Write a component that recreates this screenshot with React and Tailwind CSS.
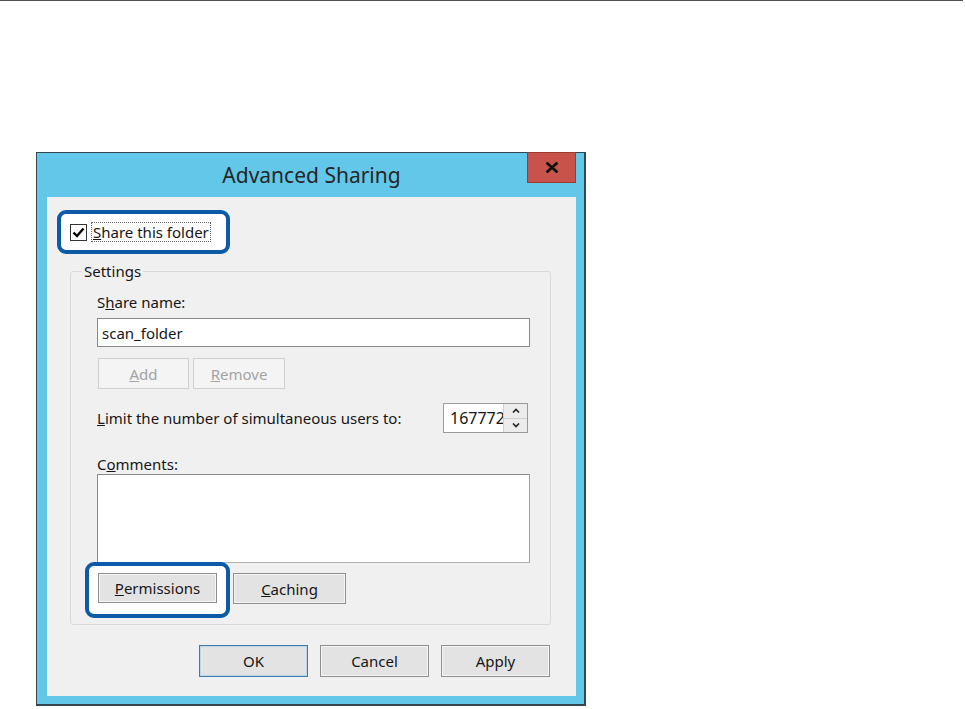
import React from 'react';

const txt = "font-['Noto_Sans',sans-serif] text-[15px] leading-[20px] text-[#161616]";

function WinButton({ children, disabled, primary, className = '' }) {
  const border = primary
    ? 'border-[#3d7bad] shadow-[inset_0_0_0_1px_#bcd6ea]'
    : disabled
    ? 'border-[#cfcfcf]'
    : 'border-[#8f8f8f] shadow-[inset_0_0_0_1px_#f6f6f6]';
  return (
    <div
      className={`flex items-center justify-center border ${border} ${
        disabled ? 'bg-[#f4f4f4] text-[#a3a3a3]' : 'bg-[#e3e3e3] text-[#161616]'
      } ${className}`}
    >
      {children}
    </div>
  );
}

export default function App() {
  return (
    <div className={`w-[965px] h-[709px] bg-white overflow-hidden ${txt}`}>
      <div className="h-px w-[963px] bg-[#505050]" />

      <div className="ml-[36px] mt-[151px] w-[550px] bg-[#62c7e9] border-t border-l border-r-[2px] border-b-[2px] border-[#35464f]">
        {/* title bar */}
        <div className="grid grid-cols-[49px_1fr_49px] h-[44px] pl-[10px] pr-[8px]">
          <div />
          <div className="flex items-center justify-center text-[21px] text-[#262626]">
            Advanced Sharing
          </div>
          <div className="-mt-px h-[31px] w-[49px] bg-[#c8534a] border border-[#9d3b33] flex items-center justify-center">
            <svg width="12" height="11" viewBox="0 0 12 11">
              <path d="M1.5 1.5 L10.5 9.5 M10.5 1.5 L1.5 9.5" stroke="#111" strokeWidth="2.8" strokeLinecap="square" />
            </svg>
          </div>
        </div>

        {/* client area */}
        <div className="ml-[10px] mr-[8px] mb-[8px] bg-[#f0f0f0] pl-[10px] pt-[13px] pb-[19px]">
          {/* highlighted checkbox */}
          <div className="w-[173px] h-[44px] border-[4px] border-[#0d5ba7] rounded-[9px] bg-white flex items-center pl-[9px]">
            <div className="w-[17px] h-[17px] border border-[#333] bg-white flex items-center justify-center">
              <svg width="13" height="11" viewBox="0 0 13 11">
                <path d="M1.5 5.5 L5 9 L11.5 1.5" stroke="#000" strokeWidth="2.4" fill="none" />
              </svg>
            </div>
            <div className="ml-[4px] px-px border border-dotted border-[#666] leading-[18px] whitespace-nowrap">
              <span className="underline">S</span>hare this folder
            </div>
          </div>

          {/* settings group */}
          <div className="mt-[17px] ml-[13px] w-[481px] border border-[#d9d9d9] rounded-[3px] pl-[26px] pr-[20px] pb-[6px]">
            <div className="-mt-[11px] -ml-[15px] w-fit px-[2px] bg-[#f0f0f0]">Settings</div>

            <div className="mt-[11px] h-[20px]">
              S<span className="underline">h</span>are name:
            </div>
            <div className="mt-[6px] h-[29px] w-[433px] bg-white border border-[#8a8a8a] flex items-center pl-[4px]">
              scan_folder
            </div>

            <div className="mt-[11px] flex gap-[4px]">
              <WinButton disabled className="w-[91px] h-[31px] ml-px">
                <span className="underline">A</span>dd
              </WinButton>
              <WinButton disabled className="w-[92px] h-[31px]">
                <span className="underline">R</span>emove
              </WinButton>
            </div>

            <div className="mt-[14px] flex items-center h-[30px]">
              <div className="whitespace-nowrap">
                <span className="underline">L</span>imit the number of simultaneous users to:
              </div>
              <div className="ml-auto mr-[2px] w-[85px] h-[30px] border border-[#9a9a9a] bg-white flex">
                <div className="w-[59px] overflow-hidden pl-[6px] flex items-center whitespace-nowrap text-[16px]">
                  167772
                </div>
                <div className="flex-1 flex flex-col border-l border-[#d0d0d0]">
                  <div className="flex-1 bg-[#ececec] border-b border-[#d0d0d0] flex items-center justify-center">
                    <svg width="8" height="5" viewBox="0 0 8 5">
                      <path d="M1 4.5 L4 1.5 L7 4.5" stroke="#222" strokeWidth="1.6" fill="none" />
                    </svg>
                  </div>
                  <div className="flex-1 bg-[#ececec] flex items-center justify-center">
                    <svg width="8" height="5" viewBox="0 0 8 5">
                      <path d="M1 0.5 L4 3.5 L7 0.5" stroke="#222" strokeWidth="1.6" fill="none" />
                    </svg>
                  </div>
                </div>
              </div>
            </div>

            <div className="mt-[21px] h-[20px]">
              C<span className="underline">o</span>mments:
            </div>
            <div className="h-[89px] w-[433px] bg-white border border-[#8a8a8a] border-b-[#b0b0b0] border-r-[#a0a0a0]" />

            <div className="-mt-px flex items-start">
              <div className="-ml-[12px] w-[145px] h-[56px] border-[4px] border-[#0d5ba7] rounded-[9px] bg-white pl-[9px] pt-[7px]">
                <WinButton className="w-[119px] h-[30px]">
                  <span className="underline">P</span>ermissions
                </WinButton>
              </div>
              <WinButton className="ml-[3px] mt-[11px] w-[113px] h-[31px]">
                <span className="underline">C</span>aching
              </WinButton>
            </div>
          </div>

          {/* dialog buttons */}
          <div className="mt-[20px] flex justify-end gap-[12px] pr-[26px]">
            <WinButton primary className="w-[109px] h-[32px]">OK</WinButton>
            <WinButton className="w-[109px] h-[32px]">Cancel</WinButton>
            <WinButton className="w-[109px] h-[32px]">Apply</WinButton>
          </div>
        </div>
      </div>
    </div>
  );
}
